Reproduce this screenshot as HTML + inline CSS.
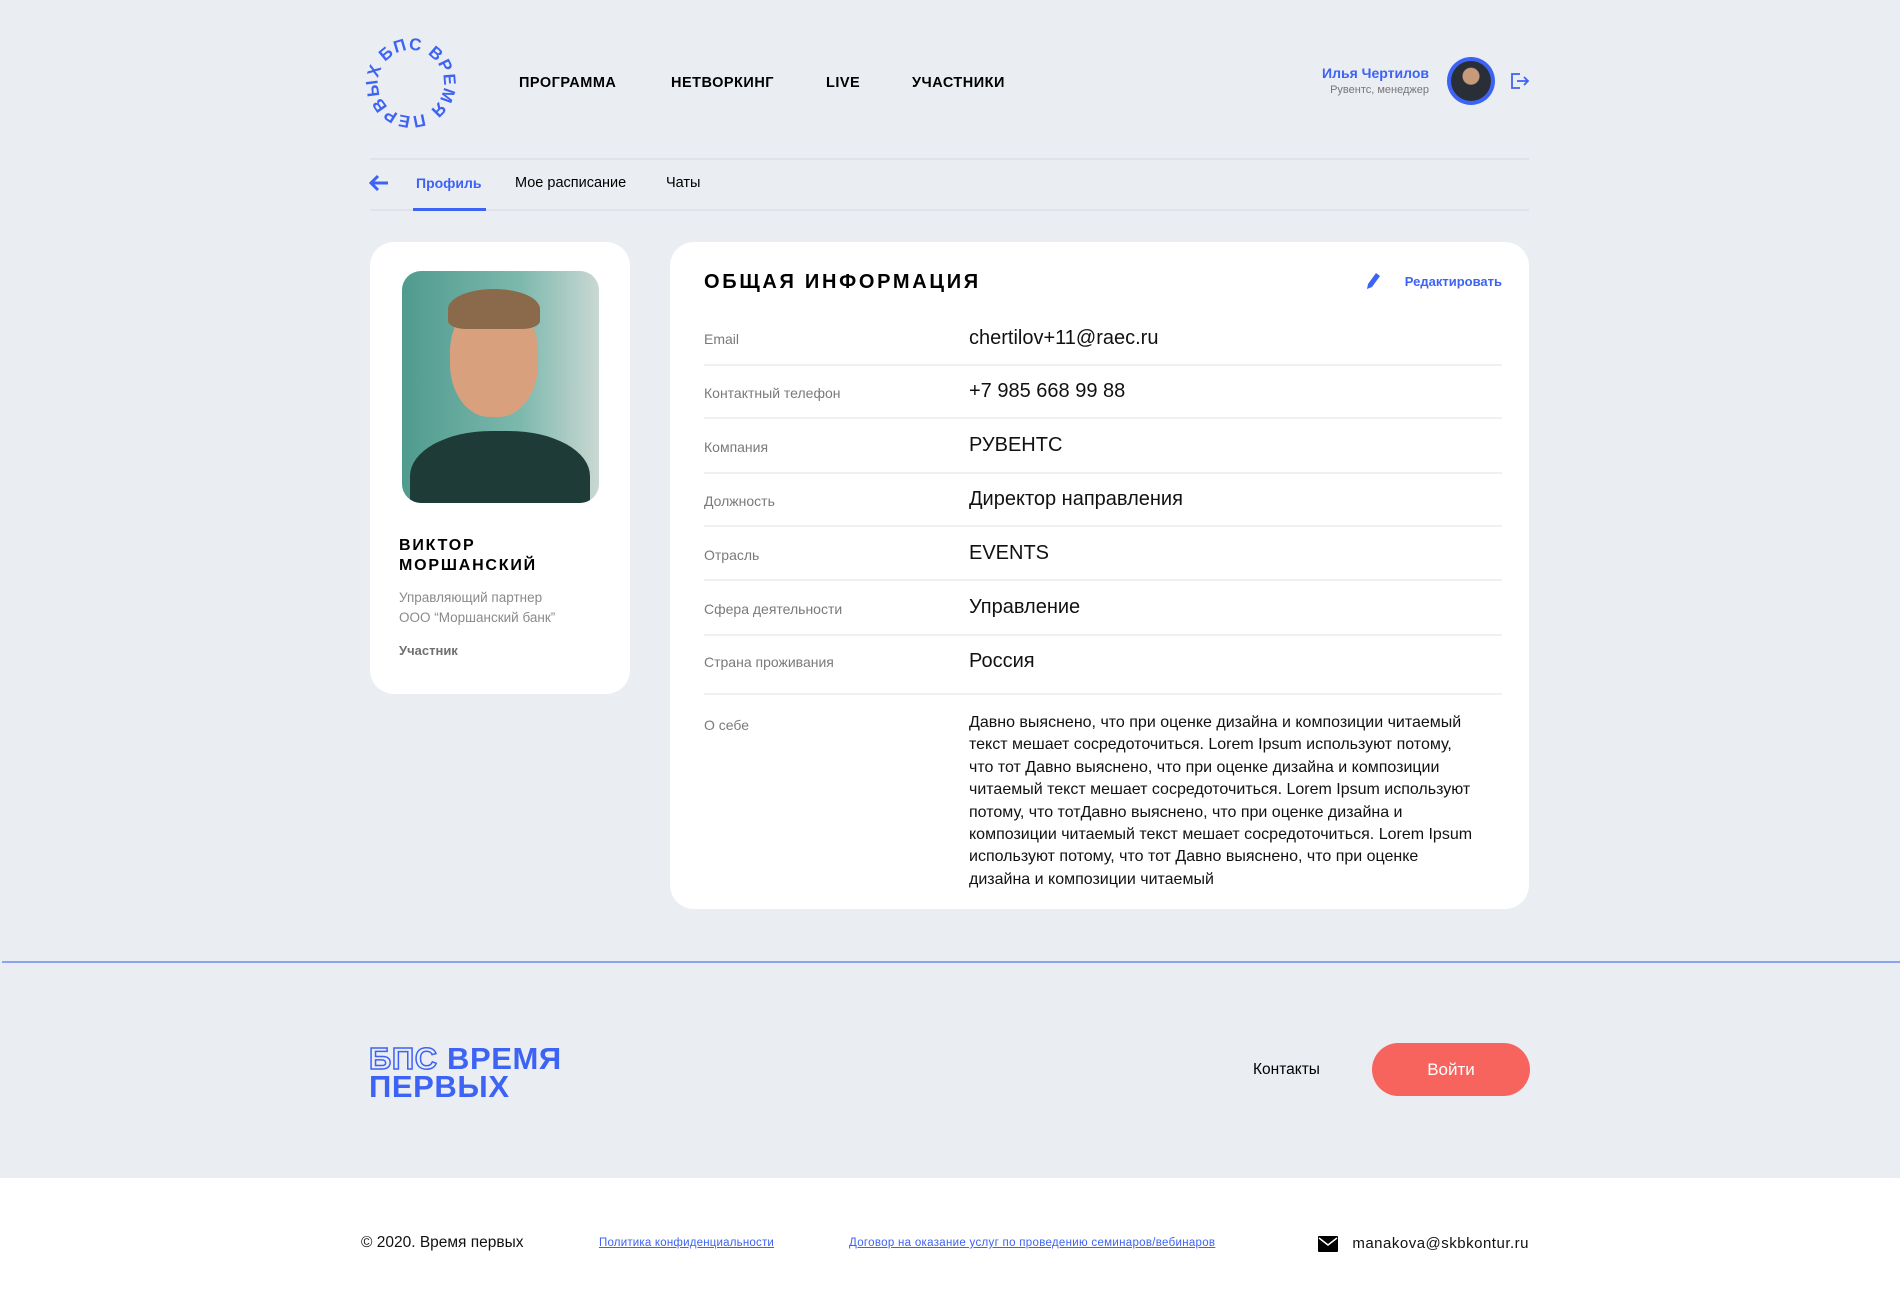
<!DOCTYPE html>
<html><head><meta charset="utf-8"><style>
*{margin:0;padding:0;box-sizing:border-box}
body{width:1900px;height:1308px;background:#eaedf2;font-family:"Liberation Sans",sans-serif;position:relative;overflow:hidden;color:#000}
.a{position:absolute;white-space:nowrap}
.nav{font-weight:900;font-size:14.5px;top:75px;letter-spacing:.5px}
.blue{color:#3d63f5}
.card{position:absolute;background:#fff;border-radius:24px}
.lbl{position:absolute;left:704px;font-size:14px;color:#7a7a7a}
.val{position:absolute;left:969px;font-size:20px;color:#111}
.hr{position:absolute;left:704px;width:798px;height:2px;background:#eef0f3}
</style></head><body>
<svg class="a" style="left:362px;top:34px;transform:rotate(28deg)" width="98" height="98" viewBox="0 0 98 98">
<defs><path id="c" d="M49,49 m-33,0 a33,33 0 1,1 66,0 a33,33 0 1,1 -66,0"/></defs>
<text font-family="Liberation Sans" font-weight="900" font-size="17" fill="#3d63f5" letter-spacing="1.2"><textPath href="#c" startOffset="3%">БПС ВРЕМЯ ПЕРВЫХ</textPath></text>
</svg>
<div class="a nav" style="left:519px">ПРОГРАММА</div>
<div class="a nav" style="left:671px">НЕТВОРКИНГ</div>
<div class="a nav" style="left:826px">LIVE</div>
<div class="a nav" style="left:912px">УЧАСТНИКИ</div>
<div class="a blue" style="right:471px;top:65px;font-size:14px;font-weight:700">Илья Чертилов</div>
<div class="a" style="right:471px;top:84px;font-size:11px;color:#777">Рувентс, менеджер</div>
<div class="a" style="left:1447px;top:57px;width:48px;height:48px;border-radius:50%;background:#3d63f5;padding:4px"><div style="width:40px;height:40px;border-radius:50%;background:radial-gradient(circle at 50% 38%,#c79a7c 0 8px,#2a2e36 9px 100%)"></div></div>
<svg class="a" style="left:1510px;top:72px" width="20" height="18" viewBox="0 0 20 18" fill="none" stroke="#3d63f5" stroke-width="1.8"><path d="M10 2H2v14h8M7 9h11M14 5l4 4-4 4"/></svg>
<div class="a" style="left:370px;top:158px;width:1159px;height:2px;background:#dfe2e8"></div>
<div class="a" style="left:370px;top:209px;width:1159px;height:2px;background:#dfe2e8"></div>
<div class="a" style="left:413px;top:208px;width:73px;height:3px;background:#3d63f5"></div>
<svg class="a" style="left:368px;top:174px" width="22" height="18" viewBox="0 0 22 18" fill="none" stroke="#3d63f5" stroke-width="3"><path d="M20 9H4M10 2L3 9l7 7"/></svg>
<div class="a blue" style="left:416px;top:175px;font-size:14px;font-weight:700">Профиль</div>
<div class="a" style="left:515px;top:175px;font-size:14.5px">Мое расписание</div>
<div class="a" style="left:666px;top:175px;font-size:14.5px">Чаты</div>

<div class="card" style="left:370px;top:242px;width:260px;height:452px"></div>
<div class="a" style="left:402px;top:271px;width:197px;height:232px;border-radius:19px;overflow:hidden;background:linear-gradient(90deg,#4f9b8e,#7db8ad 60%,#c9d8d2)">
<div style="position:absolute;left:48px;top:28px;width:88px;height:118px;border-radius:45%;background:#d9a07e"></div>
<div style="position:absolute;left:46px;top:18px;width:92px;height:40px;border-radius:50% 50% 20% 20%;background:#8a6a4a"></div>
<div style="position:absolute;left:8px;top:160px;width:180px;height:100px;border-radius:45% 45% 0 0;background:#1f3b38"></div>
</div>
<div class="a" style="left:399px;top:536px;font-size:16px;font-weight:900;letter-spacing:1.8px;line-height:20px">ВИКТОР<br>МОРШАНСКИЙ</div>
<div class="a" style="left:399px;top:588px;font-size:13.5px;color:#8a8a8a;line-height:20px">Управляющий партнер<br>ООО “Моршанский банк”</div>
<div class="a" style="left:399px;top:643px;font-size:13px;color:#707070;font-weight:700">Участник</div>

<div class="card" style="left:670px;top:242px;width:859px;height:667px"></div>
<div class="a" style="left:704px;top:271px;font-size:20px;font-weight:900;letter-spacing:2.7px">ОБЩАЯ ИНФОРМАЦИЯ</div>
<svg class="a" style="left:1365px;top:272px" width="16" height="18" viewBox="0 0 16 18"><path d="M11 1l4 3-8 11-5 2 1-5z" fill="#3d63f5"/></svg>
<div class="a blue" style="right:398px;top:274px;font-size:13px;font-weight:700">Редактировать</div>

<div class="lbl" style="top:331px">Email</div><div class="val" style="top:327px">chertilov+11@raec.ru</div><div class="hr" style="top:364px"></div>
<div class="lbl" style="top:385px">Контактный телефон</div><div class="val" style="top:380px">+7 985 668 99 88</div><div class="hr" style="top:417px"></div>
<div class="lbl" style="top:439px">Компания</div><div class="val" style="top:434px">РУВЕНТС</div><div class="hr" style="top:472px"></div>
<div class="lbl" style="top:493px">Должность</div><div class="val" style="top:488px">Директор направления</div><div class="hr" style="top:525px"></div>
<div class="lbl" style="top:547px">Отрасль</div><div class="val" style="top:542px">EVENTS</div><div class="hr" style="top:579px"></div>
<div class="lbl" style="top:601px">Сфера деятельности</div><div class="val" style="top:596px">Управление</div><div class="hr" style="top:634px"></div>
<div class="lbl" style="top:654px">Страна проживания</div><div class="val" style="top:650px">Россия</div><div class="hr" style="top:693px"></div>
<div class="lbl" style="top:717px">О себе</div>
<div class="a" style="left:969px;top:712px;width:505px;white-space:normal;font-size:16px;line-height:22.4px;color:#111">Давно выяснено, что при оценке дизайна и композиции читаемый текст мешает сосредоточиться. Lorem Ipsum используют потому, что тот Давно выяснено, что при оценке дизайна и композиции читаемый текст мешает сосредоточиться. Lorem Ipsum используют потому, что тотДавно выяснено, что при оценке дизайна и композиции читаемый текст мешает сосредоточиться. Lorem Ipsum используют потому, что тот Давно выяснено, что при оценке дизайна и композиции читаемый</div>

<div class="a" style="left:2px;top:961px;width:1898px;height:2px;background:#8aa3f4"></div>
<div class="a" style="left:369px;top:1045px;font-size:31px;font-weight:900;line-height:28px;color:#3d63f5;letter-spacing:.6px"><span style="color:#eaedf2;-webkit-text-stroke:1.5px #3d63f5">БПС</span> ВРЕМЯ<br>ПЕРВЫХ</div>
<div class="a" style="left:1253px;top:1061px;font-size:15.5px">Контакты</div>
<div class="a" style="left:1372px;top:1043px;width:158px;height:53px;border-radius:27px;background:#f7645e;color:#fff;font-size:17px;text-align:center;line-height:53px">Войти</div>

<div class="a" style="left:0;top:1178px;width:1900px;height:130px;background:#fff"></div>
<div class="a" style="left:361px;top:1234px;font-size:15.5px;color:#111">© 2020. Время первых</div>
<div class="a" style="left:599px;top:1237px;font-size:11.5px;color:#3d63f5;text-decoration:underline;letter-spacing:.2px">Политика конфиденциальности</div>
<div class="a" style="left:849px;top:1237px;font-size:11.5px;color:#3d63f5;text-decoration:underline;letter-spacing:.3px">Договор на оказание услуг по проведению семинаров/вебинаров</div>
<svg class="a" style="left:1318px;top:1236px" width="20" height="16" viewBox="0 0 20 16"><rect width="20" height="16" rx="1" fill="#000"/><path d="M1 2l9 7 9-7" stroke="#fff" stroke-width="1.5" fill="none"/></svg>
<div class="a" style="right:371px;top:1235px;font-size:15px;color:#111;letter-spacing:.5px">manakova@skbkontur.ru</div>
</body></html>
